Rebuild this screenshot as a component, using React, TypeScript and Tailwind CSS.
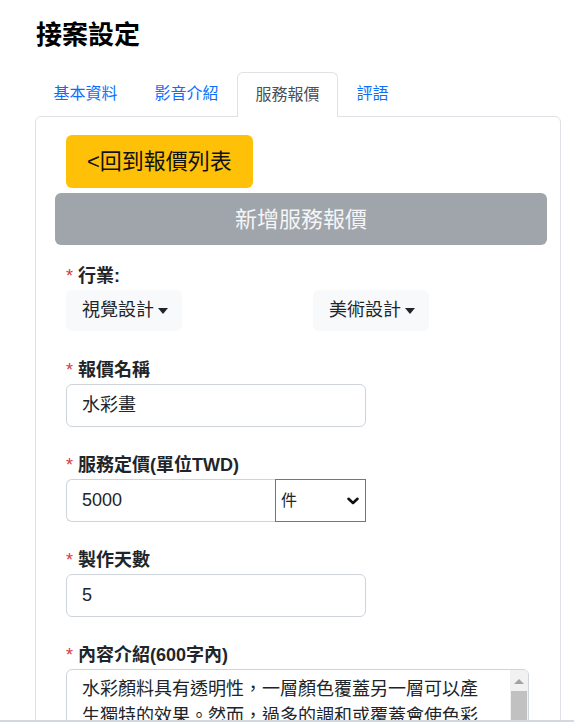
import React from "react";

function Label({ children }: { children: React.ReactNode }) {
  return (
    <div className="flex h-[27px] items-center text-[18px] font-bold leading-[27px] text-[#212529]">
      <span className="mr-[5px] font-normal text-[#dc3545]">*</span>
      <span>{children}</span>
    </div>
  );
}

function Dropdown({ text }: { text: string }) {
  return (
    <div className="inline-flex h-[41px] items-center rounded-[6px] bg-[#f8f9fa] pl-[16px] pr-[14px] text-[18px] leading-[27px] text-[#212529]">
      <span>{text}</span>
      <span className="ml-[4px] h-0 w-0 border-x-[5px] border-t-[6px] border-x-transparent border-t-[#212529]" />
    </div>
  );
}

function Input({ value }: { value: string }) {
  return (
    <div className="flex h-[43px] w-[300px] items-center rounded-[6px] border border-[#ced4da] bg-white px-[15px] text-[18px] leading-[27px] text-[#212529]">
      {value}
    </div>
  );
}

export default function App() {
  const tabs = ["基本資料", "影音介紹", "服務報價", "評語"];
  return (
    <div className="flex h-[722px] w-[574px] flex-col overflow-hidden bg-white font-['Liberation_Sans','Noto_Sans_CJK_TC',sans-serif] text-[#212529]">
      <div className="min-h-0 flex-1 overflow-hidden pl-[35px] pr-[13px]">
        <h3 className="ml-px pt-[20px] text-[26px] font-bold leading-[31px] text-black">接案設定</h3>
        <div className="mt-[21px] flex h-[44px]">
          {tabs.map((t, i) =>
            i === 2 ? (
              <div
                key={t}
                className="relative z-10 -mb-px flex h-[45px] items-center rounded-t-[6px] border border-b-0 border-[#dee2e6] bg-white px-[17.5px] text-[16px] leading-[24px] text-[#495057]"
              >
                {t}
              </div>
            ) : (
              <div
                key={t}
                className="flex h-[44px] items-center border border-transparent px-[17.5px] text-[16px] leading-[24px] text-[#0d6efd]"
              >
                {t}
              </div>
            )
          )}
        </div>
        <div className="h-[700px] rounded-[6px] border border-[#dee2e6]">
          <div className="ml-[30px] mt-[18px] inline-flex h-[53px] items-center rounded-[6px] bg-[#ffc107] px-[21px] text-[22px] leading-[33px] text-[#111]">
            &lt;回到報價列表
          </div>
          <div className="ml-[19px] mt-[5px] flex h-[52px] w-[492px] items-center justify-center rounded-[6px] bg-[#a0a4ab] text-[22px] leading-[33px] text-[#f4f5f6]">
            新增服務報價
          </div>
          <div className="pl-[30px] pt-[18px]">
            <Label>行業:</Label>
            <div className="flex">
              <div className="w-[247px]">
                <Dropdown text="視覺設計" />
              </div>
              <div>
                <Dropdown text="美術設計" />
              </div>
            </div>

            <div className="mt-[26px]">
              <Label>報價名稱</Label>
              <Input value="水彩畫" />
            </div>

            <div className="mt-[25px]">
              <Label>服務定價(單位TWD)</Label>
              <div className="flex h-[43px] w-[300px]">
                <div className="flex w-[209px] items-center rounded-l-[6px] border border-r-0 border-[#ced4da] px-[15px] text-[18px] leading-[27px]">
                  5000
                </div>
                <div className="flex flex-1 items-center justify-between border border-[#767676] pl-[5px] pr-[6px] text-[16px] leading-[24px] text-[#212529]">
                  <span>件</span>
                  <svg width="12" height="8" viewBox="0 0 12 8" fill="none">
                    <path d="M1.5 1.8 L6 6 L10.5 1.8" stroke="#111" strokeWidth="2.6" strokeLinecap="round" strokeLinejoin="round" />
                  </svg>
                </div>
              </div>
            </div>

            <div className="mt-[25px]">
              <Label>製作天數</Label>
              <Input value="5" />
            </div>

            <div className="mt-[25px]">
              <Label>內容介紹(600字內)</Label>
              <div className="flex h-[200px] w-[463px] overflow-hidden rounded-[6px] border border-[#ced4da] bg-white">
                <div className="flex-1 overflow-hidden whitespace-nowrap pl-[15px] pt-[6px] text-[18px] leading-[27px] text-[#212529]">
                  <div>水彩顏料具有透明性，一層顏色覆蓋另一層可以產</div>
                  <div>生獨特的效果。然而，過多的調和或覆蓋會使色彩</div>
                  <div>變得混濁，失去水彩應有的清透感。</div>
                </div>
                <div className="flex w-[18px] flex-col items-center bg-[#f1f1f1]">
                  <div className="mt-[9px] h-0 w-0 border-x-[5px] border-b-[5px] border-x-transparent border-b-[#a3a3a3]" />
                  <div className="mt-[7px] h-[120px] w-[16px] bg-[#c1c1c1]" />
                </div>
              </div>
            </div>
          </div>
        </div>
      </div>
      <div className="h-[2px] w-full bg-[#d3d7e0]" />
    </div>
  );
}
